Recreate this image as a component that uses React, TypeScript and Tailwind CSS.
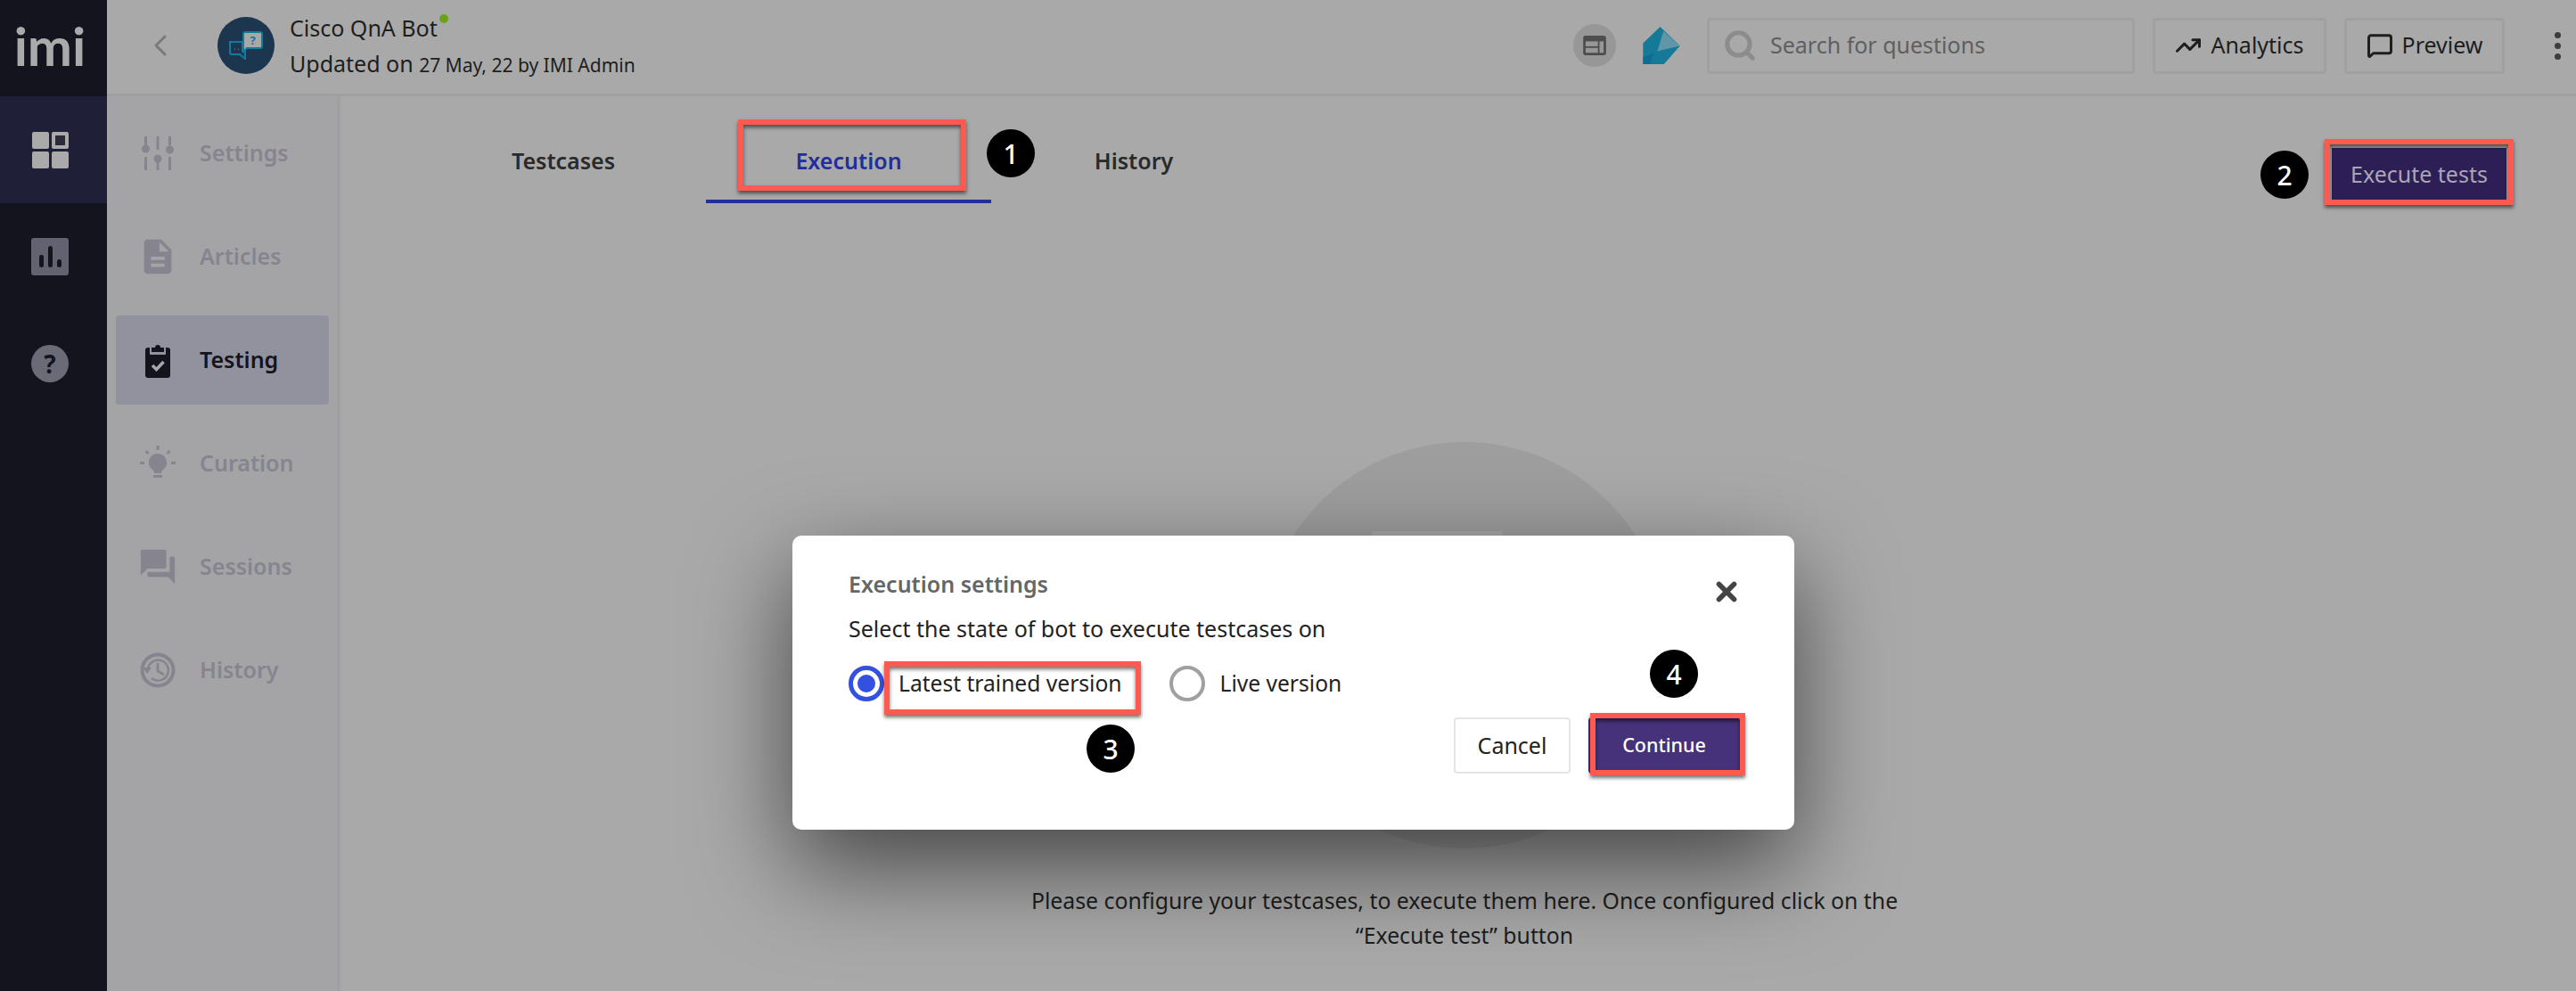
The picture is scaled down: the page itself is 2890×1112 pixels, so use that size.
import { ChevronLeft, MessageSquare, Search, TrendingUp, X } from 'lucide-react';
import { MdDescription, MdForum } from 'react-icons/md';

const SlidersIcon = () => (
    <svg viewBox="0 0 40 40" className="w-[40px] h-[40px]" fill="#86858f">
        <rect x="5" y="1" width="3" height="10" />
        <circle cx="6.5" cy="15" r="4.5" />
        <rect x="5" y="24" width="3" height="15" />
        <rect x="18.5" y="1" width="3" height="15" />
        <circle cx="20" cy="26" r="4.5" />
        <rect x="18.5" y="30" width="3" height="9" />
        <rect x="32" y="1" width="3" height="10" />
        <circle cx="33.5" cy="16" r="4.5" />
        <rect x="32" y="24" width="3" height="15" />
    </svg>
);

const BulbIcon = () => (
    <svg viewBox="0 0 40 40" className="w-[40px] h-[40px]" fill="#86858f">
        <path d="M20 9a10 10 0 0 0-6 18c1 1 2 2 2 4h8c0-2 1-3 2-4a10 10 0 0 0-6-18z" />
        <rect x="15" y="33" width="10" height="3" />
        <rect x="18.5" y="0" width="3" height="5" />
        <rect x="0" y="18" width="5" height="3" />
        <rect x="35" y="18" width="5" height="3" />
        <rect x="6" y="6" width="4" height="3" transform="rotate(45 8 7.5)" />
        <rect x="30" y="6" width="4" height="3" transform="rotate(-45 32 7.5)" />
    </svg>
);

const RestoreIcon = () => (
    <svg viewBox="0 0 40 40" className="w-[40px] h-[40px]" fill="none" stroke="#86858f">
        <circle cx="20" cy="20" r="17.5" strokeWidth="4" />
        <path d="M9 22a11.500 11.500 0 1 1 4 7" strokeWidth="2.500" />
        <path d="M3 17h10l-5 7z" fill="#86858f" stroke="none" />
        <path d="M20 12v9l7 4" strokeWidth="3" />
    </svg>
);

const ClipboardIcon = () => (
    <svg viewBox="0 0 28 39" className="w-[28px] h-[39px]">
        <rect x="0" y="5" width="28" height="34" rx="3" fill="#14141f" />
        <rect x="5" y="1" width="18" height="12" rx="1" fill="#92929e" />
        <path d="M7 10V5h4a3 3 0 0 1 6 0h4v5z" fill="#14141f" />
        <path d="M8 25l4.500 4.500L20.500 21" fill="none" stroke="#a9a9a9" strokeWidth="3.500" />
    </svg>
);

const navItems = [
    { name: 'Settings', icon: <SlidersIcon /> },
    { name: 'Articles', icon: <MdDescription className="w-[46px] h-[46px] text-[#86858f]" /> },
    { name: 'Testing', icon: <ClipboardIcon />, active: true },
    { name: 'Curation', icon: <BulbIcon /> },
    { name: 'Sessions', icon: <MdForum className="w-[46px] h-[46px] text-[#86858f]" /> },
    { name: 'History', icon: <RestoreIcon /> },
];

const Marker = ({ n, className }: { n: number; className: string }) => (
    <div className={`absolute w-[54px] h-[54px] rounded-full bg-black text-white flex items-center justify-center text-[30px] font-medium ${className}`}>
        {n}
    </div>
);

const redBox = 'absolute border-[6px] border-[#ff5a4f] shadow-[0_3px_4px_rgba(0,0,0,0.55),inset_0_3px_4px_rgba(0,0,0,0.55)]';

const BotAvatar = () => (
    <div className="w-[64px] h-[64px] rounded-full bg-[#1c364f] flex items-center justify-center">
        <svg viewBox="0 0 40 32" className="w-[40px] h-[32px]" fill="none" stroke="#127a9a" strokeWidth="2">
            <path d="M2 12h14v10h3v9l-6-5H4a2 2 0 0 1-2-2z" />
            <path d="M17 3a2 2 0 0 1 2-2h17a2 2 0 0 1 2 2v14a2 2 0 0 1-2 2H21l-4 4z" fill="#a7a9a9" />
            <text x="27.500" y="15" fontSize="13" fontWeight="700" fill="#127a9a" stroke="none" textAnchor="middle">?</text>
            <path d="M7 20h1M11 20h1" />
        </svg>
    </div>
);

const App = () => {
    return (
        <div className="relative flex h-[1112px] w-[2890px] overflow-hidden bg-[#a9a9a9] font-['Noto_Sans',sans-serif] text-[25px] text-[#1e1e1e]">
            {/* main rail */}
            <aside className="flex w-[120px] flex-none flex-col bg-[#14141f]">
                <div className="flex h-[108px] items-center justify-center pr-[8px] pb-[6px] font-['Lato',sans-serif] text-[60px] font-bold leading-none text-[#aaaaaa]">imi</div>
                <div className="flex h-[120px] items-center justify-center bg-[#1f2037]">
                    <div className="grid grid-cols-2 gap-[3px] -ml-[8px]">
                        <div className="w-[19px] h-[19px] rounded-[2px] bg-[#aaaaaa]" />
                        <div className="w-[19px] h-[19px] rounded-[2px] border-[4px] border-[#aaaaaa] bg-[#2b2b3a]" />
                        <div className="w-[19px] h-[19px] rounded-[2px] bg-[#aaaaaa]" />
                        <div className="w-[19px] h-[19px] rounded-[2px] bg-[#aaaaaa]" />
                    </div>
                </div>
                <div className="flex h-[120px] items-center justify-center">
                    <div className="-ml-[8px] flex h-[42px] w-[42px] items-end justify-center gap-[5px] rounded-[3px] bg-[#626270] pb-[9px]">
                        <div className="h-[14px] w-[5px] rounded-full bg-[#14141f]" />
                        <div className="h-[24px] w-[5px] rounded-full bg-[#14141f]" />
                        <div className="h-[9px] w-[5px] rounded-full bg-[#14141f]" />
                    </div>
                </div>
                <div className="flex h-[120px] items-center justify-center">
                    <div className="-ml-[8px] flex h-[42px] w-[42px] items-center justify-center rounded-full bg-[#6b6b78] text-[28px] font-bold text-[#14141f]">?</div>
                </div>
            </aside>

            <div className="flex min-w-0 flex-1 flex-col">
                {/* header */}
                <header className="flex h-[108px] flex-none items-center border-b-[3px] border-[#a0a0a0] pb-[3px]">
                    <ChevronLeft className="ml-[40px] h-[40px] w-[40px] text-[#7a7a7a]" strokeWidth={1.8} />
                    <div className="ml-[44px]"><BotAvatar /></div>
                    <div className="ml-[17px] flex flex-col">
                        <div className="relative h-[40px] leading-[40px]">
                            Cisco QnA Bot
                            <span className="absolute left-[168px] top-[5px] h-[10px] w-[10px] rounded-full bg-[#6aa318]" />
                        </div>
                        <div className="h-[40px] leading-[40px]">
                            Updated on <span className="text-[21px]">27 May, 22 by IMI Admin</span>
                        </div>
                    </div>
                    <div className="ml-auto flex items-center">
                        <div className="flex h-[48px] w-[48px] items-center justify-center rounded-full bg-[#979797]">
                            <svg viewBox="0 0 28 24" className="h-[22px] w-[26px]">
                                <rect width="28" height="24" rx="3" fill="#4d4d4d" />
                                <rect x="3" y="7" width="15" height="6" fill="#979797" />
                                <rect x="3" y="15" width="15" height="6" fill="#979797" />
                                <rect x="20" y="7" width="5" height="14" fill="#979797" />
                            </svg>
                        </div>
                        <svg viewBox="0 0 123 125" className="ml-[30px] h-[42px] w-[42px]">
                            <polygon points="57,0 123,64 70,125 0,125 0,55" fill="#157a98" />
                            <polygon points="68,15 123,64 48,82" fill="#5f97a9" />
                            <polygon points="0,102 37,87 22,125 0,125" fill="#0e6d94" />
                        </svg>
                        <div className="ml-[30px] flex h-[63px] w-[480px] items-center rounded-[4px] border-[3px] border-[#a0a0a0]">
                            <Search className="ml-[15px] h-[38px] w-[38px] text-[#8c8c8c]" strokeWidth={3.2} />
                            <span className="ml-[15px] text-[#5f5f5f]">Search for questions</span>
                        </div>
                        <div className="ml-[20px] flex h-[63px] w-[195px] items-center justify-center gap-[10px] rounded-[4px] border-[3px] border-[#a0a0a0]">
                            <TrendingUp className="h-[30px] w-[30px]" strokeWidth={2.4} />
                            Analytics
                        </div>
                        <div className="ml-[20px] flex h-[63px] w-[180px] items-center justify-center gap-[10px] rounded-[4px] border-[3px] border-[#a0a0a0]">
                            <MessageSquare className="h-[30px] w-[30px]" strokeWidth={2.4} />
                            Preview
                        </div>
                        <div className="ml-[56px] mr-[17px] flex flex-col gap-[5px]">
                            <div className="h-[7px] w-[7px] rounded-full bg-[#3d3d3d]" />
                            <div className="h-[7px] w-[7px] rounded-full bg-[#3d3d3d]" />
                            <div className="h-[7px] w-[7px] rounded-full bg-[#3d3d3d]" />
                        </div>
                    </div>
                </header>

                <div className="flex min-h-0 flex-1">
                    {/* secondary nav */}
                    <nav className="flex w-[260px] flex-none flex-col gap-[16px] border-r border-[#9c9c9e] bg-[#a4a4a7] px-[10px] pt-[14px] shadow-[2px_0_3px_rgba(0,0,0,0.05)]">
                        {navItems.map((item) => (
                            <div
                                key={item.name}
                                className={`flex h-[100px] items-center rounded-[4px] ${item.active ? 'bg-[#92929e]' : ''}`}
                            >
                                <div className="flex w-[94px] flex-none justify-center">{item.icon}</div>
                                <span className={`font-semibold ${item.active ? 'text-[#14141f]' : 'text-[#86858f]'}`}>{item.name}</span>
                            </div>
                        ))}
                    </nav>

                    {/* content */}
                    <main className="flex min-w-0 flex-1 flex-col">
                        <div className="flex items-start justify-between pl-[92px] pr-[78px]">
                            <div className="flex font-semibold">
                                <div className="flex h-[120px] w-[320px] items-end justify-center pb-[29px] text-[#2a2a2a]">Testcases</div>
                                <div className="flex h-[120px] w-[320px] items-end justify-center border-b-[4px] border-[#222e9b] pb-[25px] text-[#222e9b]">Execution</div>
                                <div className="flex h-[120px] w-[320px] items-end justify-center pb-[29px] text-[#2a2a2a]">History</div>
                            </div>
                            <div className="mt-[58px] flex h-[60px] w-[196px] items-center justify-center bg-[#2d1f55] text-[#a9a5b5]">Execute tests</div>
                        </div>
                        <div className="flex flex-col items-center pl-[16px]">
                            <div className="relative mt-[268px] h-[456px] w-[456px] rounded-full bg-[#9e9e9e]">
                                <div className="absolute left-[124px] top-[100px] h-[120px] w-[147px] bg-[#a8a8a8]" />
                            </div>
                            <p className="mt-[39px] w-[1000px] text-center text-[24.8px] leading-[39px]">
                                Please configure your testcases, to execute them here. Once configured click on the “Execute test” button
                            </p>
                        </div>
                    </main>
                </div>
            </div>

            {/* modal */}
            <div className="absolute left-[889px] top-[601px] flex h-[330px] w-[1124px] flex-col rounded-[10px] bg-white px-[63px] pt-[34px] leading-[40px] shadow-[0_40px_110px_rgba(0,0,0,0.6)]">
                <div className="flex h-[40px] items-center justify-between">
                    <span className="font-semibold text-[#666666]">Execution settings</span>
                    <X className="mr-[-4px] mt-[18px] h-[34px] w-[34px] text-[#444444]" strokeWidth={4} />
                </div>
                <div className="mt-[10px] h-[40px] text-[#222222]">Select the state of bot to execute testcases on</div>
                <div className="mt-[22px] flex h-[40px] items-center">
                    <div className="flex h-[40px] w-[40px] items-center justify-center rounded-full border-[5px] border-[#3450e0]">
                        <div className="h-[20px] w-[20px] rounded-full bg-[#3450e0]" />
                    </div>
                    <span className="ml-[16px] text-[24.6px] text-[#222222]">Latest trained version</span>
                    <div className="ml-[53px] h-[40px] w-[40px] rounded-full border-[4px] border-[#a0a0a0]" />
                    <span className="ml-[17px] text-[24.6px] text-[#222222]">Live version</span>
                </div>
                <div className="mr-[-2px] mt-[18px] flex justify-end gap-[20px]">
                    <div className="flex h-[63px] w-[131px] items-center justify-center rounded-[4px] border-2 border-[#e5e5e5] pb-[2px] text-[#222222]">Cancel</div>
                    <div className="flex h-[63px] w-[170px] items-center justify-center rounded-[4px] bg-[#46327a] pb-[2px] text-[21.5px] font-medium text-white">Continue</div>
                </div>
            </div>

            {/* annotations */}
            <div className={`${redBox} left-[828px] top-[134px] h-[80px] w-[256px]`} />
            <div className={`${redBox} left-[2608px] top-[156px] h-[74px] w-[212px]`} />
            <div className={`${redBox} left-[992px] top-[742px] h-[60px] w-[288px]`} />
            <div className={`${redBox} left-[1784px] top-[800px] h-[70px] w-[174px]`} />
            <Marker n={1} className="left-[1107px] top-[145px]" />
            <Marker n={2} className="left-[2536px] top-[169px]" />
            <Marker n={3} className="left-[1219px] top-[813px]" />
            <Marker n={4} className="left-[1851px] top-[729px]" />
        </div>
    );
};

export default App;
